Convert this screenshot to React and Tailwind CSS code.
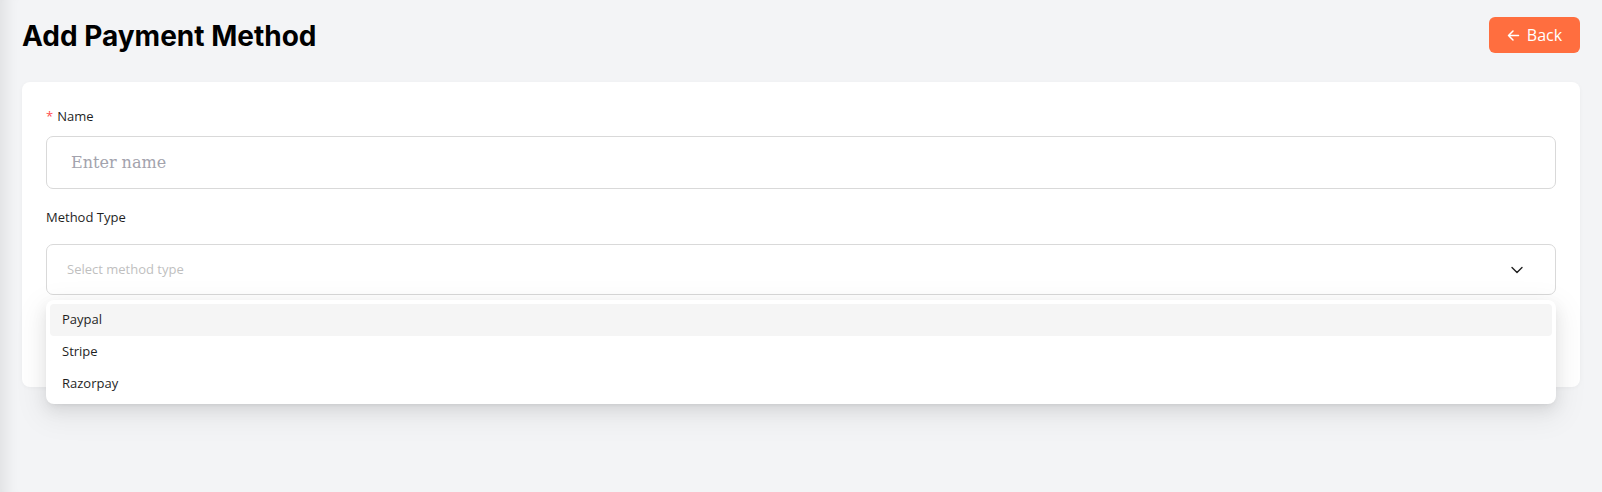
import React from "react";

const options = ["Paypal", "Stripe", "Razorpay"];

function Chevron() {
  return (
    <svg width="14" height="14" viewBox="0 0 14 14" fill="none" stroke="#1f1f1f" strokeWidth="1.4" strokeLinecap="round" strokeLinejoin="round">
      <path d="M2 4.5l5 5 5-5" />
    </svg>
  );
}

function ArrowLeft() {
  return (
    <svg width="13" height="13" viewBox="0 0 13 13" fill="none" stroke="white" strokeWidth="1.5" strokeLinecap="round" strokeLinejoin="round">
      <path d="M11.5 6.5H1.5M6 2L1.5 6.5 6 11" />
    </svg>
  );
}

export default function App() {
  return (
    <div
      className="min-h-[492px] w-full bg-[#f3f4f6] shadow-[inset_18px_0_14px_-12px_rgba(0,0,0,0.08)] px-[22px] pt-[17px]"
      style={{ fontFamily: "'Open Sans', 'Noto Sans', sans-serif" }}
    >
      <div className="flex items-center justify-between h-[36px]">
        <h1 className="text-[28px] font-bold text-black tracking-[0px] leading-none pt-[2px]" style={{ fontFamily: "Inter, sans-serif" }}>
          Add Payment Method
        </h1>
        <button className="flex items-center gap-[7px] h-[36px] w-[91px] justify-center rounded-[6px] bg-[#ff6e3f] text-white text-[16px]">
          <ArrowLeft />
          <span>Back</span>
        </button>
      </div>

      <div className="mt-[29px] bg-white rounded-[8px] px-[24px] pt-[25px] pb-[24px] shadow-[0_1px_4px_rgba(0,0,0,0.04)] relative">
        <label className="flex items-center gap-[4px] text-[13px] text-[#1f1f1f] h-[20px]">
          <span className="text-[#ff4d4f] text-[13px]">*</span>
          Name
        </label>
        <div className="mt-[9px] h-[53px] border border-[#d9d9d9] rounded-[7px] flex items-center px-[24px]">
          <span className="text-[16px] text-[#a3a3ad]" style={{ fontFamily: "'DejaVu Serif', serif" }}>
            Enter name
          </span>
        </div>

        <label className="block mt-[18px] text-[13px] text-[#1f1f1f] h-[20px] leading-[20px]">Method Type</label>
        <div className="relative mt-[17px]">
          <div className="h-[51px] border border-[#d9d9d9] rounded-[7px] flex items-center justify-between pl-[20px] pr-[31px]">
            <span className="text-[13px] text-[#bfbfbf]">Select method type</span>
            <Chevron />
          </div>
          <div className="absolute left-0 right-0 top-[56px] bg-white rounded-[8px] p-[4px] shadow-[0_6px_16px_0_rgba(0,0,0,0.08),0_3px_6px_-4px_rgba(0,0,0,0.12),0_9px_28px_8px_rgba(0,0,0,0.05)] z-10">
            {options.map((o, i) => (
              <div
                key={o}
                className={`h-[32px] flex items-center px-[12px] rounded-[4px] text-[13px] text-[#1f1f1f] ${i === 0 ? "bg-[#f5f5f5]" : ""}`}
              >
                {o}
              </div>
            ))}
          </div>
        </div>
        <div className="h-[68px]" />
      </div>
    </div>
  );
}
